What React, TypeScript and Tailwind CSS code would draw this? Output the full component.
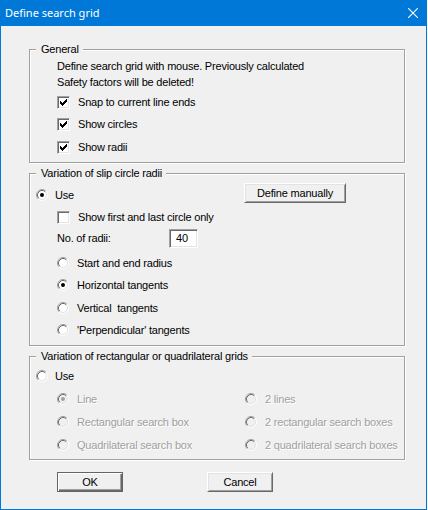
import type { ReactNode } from 'react';

// classic 3D radio button, 12x12
function Radio({ checked = false, disabled = false }: { checked?: boolean; disabled?: boolean }) {
  return (
    <svg width="12" height="12" viewBox="0 0 12 12" className="shrink-0">
      <circle cx="6" cy="6" r="4.5" fill={disabled ? '#f0f0f0' : '#ffffff'} />
      <path d="M2.11 9.89 A5.5 5.5 0 0 1 9.89 2.11" fill="none" stroke="#a0a0a0" strokeWidth="1" />
      <path d="M9.89 2.11 A5.5 5.5 0 0 1 2.11 9.89" fill="none" stroke="#ffffff" strokeWidth="1" />
      <path d="M2.82 9.18 A4.5 4.5 0 0 1 9.18 2.82" fill="none" stroke="#696969" strokeWidth="1" />
      <path d="M9.18 2.82 A4.5 4.5 0 0 1 2.82 9.18" fill="none" stroke="#e3e3e3" strokeWidth="1" />
      {checked && <circle cx="6" cy="6" r="2" fill={disabled ? '#a0a0a0' : '#000000'} />}
    </svg>
  );
}

// classic 3D check box, 13x13
function CheckBox({ checked = false }: { checked?: boolean }) {
  const cols = [2, 3, 4, 3, 2, 1, 0];
  return (
    <span className="box-border flex size-[13px] shrink-0 border border-t-[#a0a0a0] border-l-[#a0a0a0] border-r-white border-b-white bg-white shadow-[inset_1px_1px_0_#696969,inset_-1px_-1px_0_#e3e3e3]">
      {checked && (
        <svg width="11" height="11" viewBox="0 0 11 11" shapeRendering="crispEdges">
          {cols.map((r, c) => (
            <rect key={c} x={2 + c} y={2 + r} width="1" height="3" fill="#000" />
          ))}
        </svg>
      )}
    </span>
  );
}

function Group({ title, children }: { title: string; children: ReactNode }) {
  return (
    <div className="w-[376px] border border-[#a0a0a0] shadow-[inset_1px_1px_0_#fff,1px_1px_0_#fff]">
      <div className="-mt-[9px] ml-[6px] h-[16px] w-fit bg-[#f0f0f0] pl-[5px] pr-[4px] leading-[16px]">{title}</div>
      {children}
    </div>
  );
}

function CheckRow({ label, checked, className = '' }: { label: string; checked?: boolean; className?: string }) {
  return (
    <div className={`flex h-[22px] items-center pl-[27px] ${className}`}>
      <CheckBox checked={checked} />
      <span className="ml-[8px]">{label}</span>
    </div>
  );
}

function RadioRow({
  label,
  checked,
  disabled,
  className = '',
}: {
  label: string;
  checked?: boolean;
  disabled?: boolean;
  className?: string;
}) {
  return (
    <div className={`flex h-[22px] items-center ${className}`}>
      <Radio checked={checked} disabled={disabled} />
      <span className={`ml-[8px] ${disabled ? 'text-[#a0a0a0] [text-shadow:1px_1px_0_#fff]' : ''}`}>{label}</span>
    </div>
  );
}

function PushButton({ label, isDefault = false, className = '' }: { label: string; isDefault?: boolean; className?: string }) {
  const edge = isDefault
    ? 'border border-[#646464] shadow-[inset_1px_1px_0_#fff,inset_-1px_-1px_0_#696969,inset_-2px_-2px_0_#a0a0a0]'
    : 'border border-t-white border-l-white border-r-[#696969] border-b-[#696969] shadow-[inset_1px_1px_0_#e3e3e3,inset_-1px_-1px_0_#a0a0a0]';
  return (
    <div className={`box-border flex h-[20px] items-center justify-center bg-[#f0f0f0] ${edge} ${className}`}>
      {label}
    </div>
  );
}

export default function App() {
  return (
    <div className="h-[510px] w-[428px] bg-white font-['Liberation_Sans',Arial,sans-serif] text-[11px] leading-[16px] tracking-[-0.2px] text-black">
      <div className="box-border flex h-[510px] w-[427px] flex-col border-x border-b border-[#0078d7] bg-[#f0f0f0]">
        {/* Title bar */}
        <div className="-mx-px flex h-[26px] shrink-0 items-center justify-between bg-[#0078d7] pl-[5px] pr-[9px]">
          <span className="font-['Noto_Sans',sans-serif] text-[11px] tracking-normal text-white">Define search grid</span>
          <svg width="10" height="10" viewBox="0 0 10 10">
            <path d="M0 0 L10 10 M10 0 L0 10" stroke="#fff" strokeWidth="1.1" />
          </svg>
        </div>

        <div className="flex flex-col pl-[28px] pt-[23px]">
          <Group title="General">
            <div className="mt-[1px] pl-[27px]">
              <div>Define search grid with mouse. Previously calculated</div>
              <div>Safety factors will be deleted!</div>
            </div>
            <div className="mt-[1px] pb-[4px]">
              <CheckRow label="Snap to current line ends" checked />
              <CheckRow label="Show circles" checked />
              <CheckRow label="Show radii" checked className="mt-[1px]" />
            </div>
          </Group>

          <div className="mt-[10px]">
            <Group title="Variation of slip circle radii">
              <div className="mt-[3px] flex h-[22px] items-start pl-[6px]">
                <div className="flex h-[22px] w-[208px] items-center">
                  <Radio checked />
                  <span className="ml-[7px]">Use</span>
                </div>
                <PushButton label="Define manually" className="-mt-px w-[102px]" />
              </div>
              <CheckRow label="Show first and last circle only" />
              <div className="flex h-[20px] items-center pl-[27px]">
                <span className="w-[112px]">No. of radii:</span>
                <div className="box-border h-[19px] w-[29px] border border-t-[#a0a0a0] border-l-[#a0a0a0] border-r-white border-b-white bg-white pl-[6px] leading-[17px] shadow-[inset_1px_1px_0_#696969,inset_-1px_-1px_0_#e3e3e3]">
                  40
                </div>
              </div>
              <div className="mt-[4px] pb-[4px] pl-[27px]">
                <RadioRow label="Start and end radius" />
                <RadioRow label="Horizontal tangents" checked />
                <RadioRow label="Vertical  tangents" className="mt-[1px] whitespace-pre" />
                <RadioRow label="'Perpendicular' tangents" />
              </div>
            </Group>
          </div>

          <div className="mt-[10px]">
            <Group title="Variation of rectangular or quadrilateral grids">
              <div className="mt-[1px] flex h-[22px] items-center pl-[6px]">
                <Radio />
                <span className="ml-[7px]">Use</span>
              </div>
              <div className="grid grid-cols-[188px_1fr] gap-y-[1px] pb-[3px] pl-[27px] pt-[1px]">
                <RadioRow label="Line" checked disabled />
                <RadioRow label="2 lines" disabled />
                <RadioRow label="Rectangular search box" disabled />
                <RadioRow label="2 rectangular search boxes" disabled />
                <RadioRow label="Quadrilateral search box" disabled />
                <RadioRow label="2 quadrilateral search boxes" disabled />
              </div>
            </Group>
          </div>

          {/* Dialog buttons */}
          <div className="mt-[12px] flex pl-[28px]">
            <PushButton label="OK" isDefault className="w-[66px]" />
            <PushButton label="Cancel" className="ml-[84px] w-[66px]" />
          </div>
        </div>
      </div>
    </div>
  );
}
